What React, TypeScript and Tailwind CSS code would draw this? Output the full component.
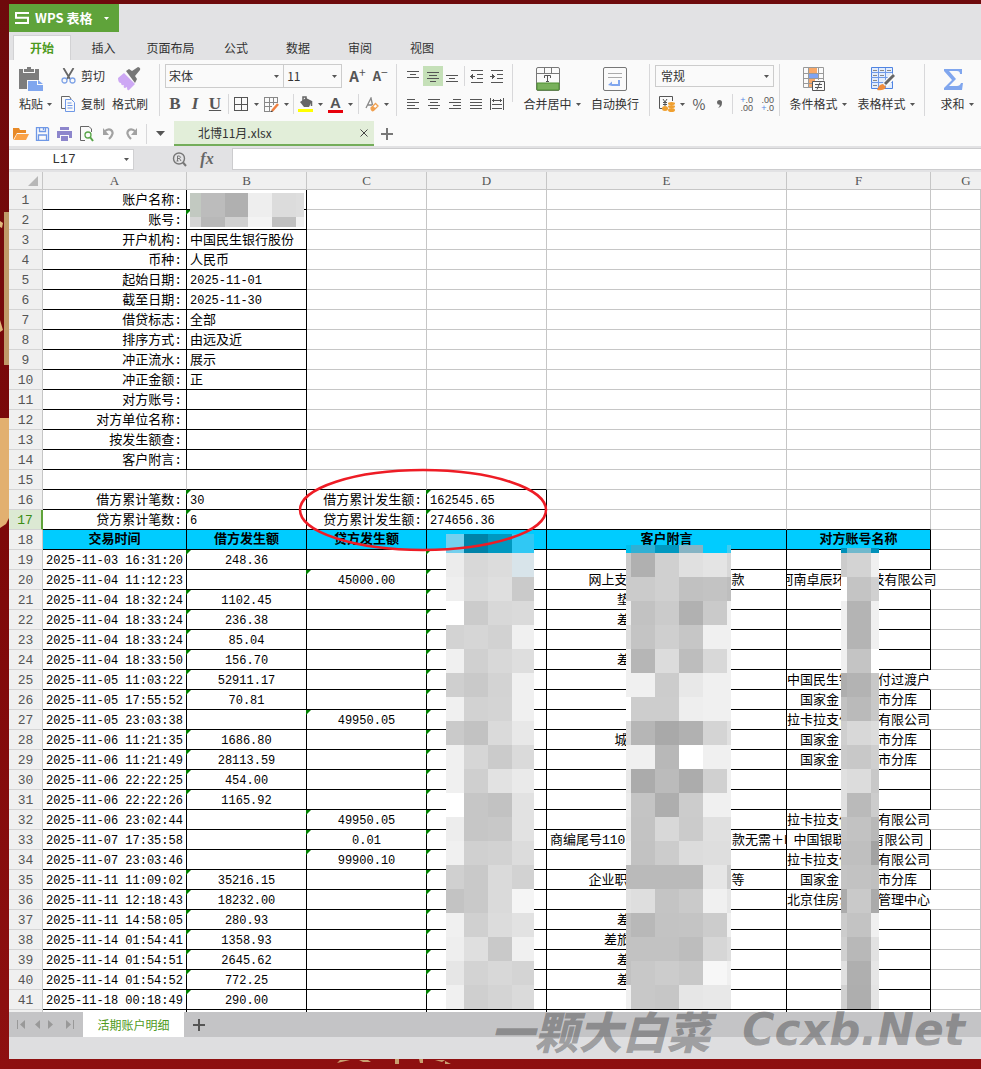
import { ReactNode } from "react";

const gap = (n: number) => "\u3000".repeat(n);

const info = [
  ["账户名称:", ""],
  ["账号:", ""],
  ["开户机构:", "中国民生银行股份有限公司北京分行"],
  ["币种:", "人民币"],
  ["起始日期:", "2025-11-01"],
  ["截至日期:", "2025-11-30"],
  ["借贷标志:", "全部"],
  ["排序方式:", "由远及近"],
  ["冲正流水:", "展示"],
  ["冲正金额:", "正"],
  ["对方账号:", ""],
  ["对方单位名称:", ""],
  ["按发生额查:", ""],
  ["客户附言:", ""],
];

const totals = [
  ["借方累计笔数:", "30", "借方累计发生额:", "162545.65"],
  ["贷方累计笔数:", "6", "贷方累计发生额:", "274656.36"],
];

const lakala = "拉卡拉支付" + gap(2) + "有限公司";
const treasury = "国家金" + gap(3) + "市分库";
const travel = "差" + gap(6) + " ";

// time, debit, credit, remark, counterparty
const records = [
  ["2025-11-03 16:31:20", "248.36", "", "", ""],
  ["2025-11-04 11:12:23", "", "45000.00", "网上支" + gap(8) + "款", "河南卓辰环" + gap(2) + "技有限公司"],
  ["2025-11-04 18:32:24", "1102.45", "", "垫" + gap(6) + " ", ""],
  ["2025-11-04 18:33:24", "236.38", "", travel, ""],
  ["2025-11-04 18:33:24", "85.04", "", "", ""],
  ["2025-11-04 18:33:50", "156.70", "", travel, ""],
  ["2025-11-05 11:03:22", "52911.17", "", "", "中国民生银" + gap(2) + "付过渡户"],
  ["2025-11-05 17:55:52", "70.81", "", "", treasury],
  ["2025-11-05 23:03:38", "", "49950.05", "", lakala],
  ["2025-11-06 11:21:35", "1686.80", "", "城" + gap(7), treasury],
  ["2025-11-06 11:21:49", "28113.59", "", "", treasury],
  ["2025-11-06 22:22:25", "454.00", "", "", ""],
  ["2025-11-06 22:22:26", "1165.92", "", "", ""],
  ["2025-11-06 23:02:44", "", "49950.05", "", lakala],
  ["2025-11-07 17:35:58", "", "0.01", "商编尾号1102" + gap(7) + " 款无需＋h", "中国银联" + gap(2) + "有限公司"],
  ["2025-11-07 23:03:46", "", "99900.10", "", lakala],
  ["2025-11-11 11:09:02", "35216.15", "", "企业职" + gap(8) + "等", treasury],
  ["2025-11-11 12:18:43", "18232.00", "", "", "北京住房公" + gap(2) + "管理中心"],
  ["2025-11-11 14:58:05", "280.93", "", travel, ""],
  ["2025-11-14 01:54:41", "1358.93", "", "差旅" + gap(7) + " ", ""],
  ["2025-11-14 01:54:51", "2645.62", "", travel, ""],
  ["2025-11-14 01:54:52", "772.25", "", travel, ""],
  ["2025-11-18 00:18:49", "290.00", "", "", ""],
];

const steps = (first: number, total: number) => {
  const out = [0];
  for (let v = first; v < total; v += 24) out.push(v);
  return [...out, total];
};

const maskB = ["c2c9c1 bc b0 ee dc de", "d5 b8 d0 f3 c0 f0"];
const maskD = [
  "74d0ee 0082a8 0098c0 30c8f4", "ec d8 dc d8e4ea", "ef da df ca", "ff cb d8 da", "d3 d6 d2 f0",
  "f0 d0 d8 de", "cf c9 d3 f0", "f0 d2 d4 f0", "ca c2 da e8", "f0 d6 cb da", "f0 cf e2 ea",
  "ff c6 c2 e2", "ed c6 c8 e2", "f0 d0 d2 dc", "d0 c9 da d2", "c3 c9 da f5", "f0 d0 dc e2",
  "ee df c9 f0", "e6 d3 d8 d4", "f0 cf d4 da",
];
const maskE = [
  "00c0ec 30b0d4 0098c0 86b4c4 00ccff 40ccf0", "cb b0 d0 e0 e4 d8", "cb cb d0 c1 c3 be",
  "ef c2 cb b1 ca f0", "dc c4 cf c6 f0 f0", "f0 b6 dc bd d8 f0", "f0 f0 cc e8 f0 f0",
  "ff cd cd ee f0 f0", "dc b6 a9 b1 d4 e0", "f0 f0 b8 ff f0 f0", "e8 ab bb ac d0 f0",
  "ec c4 ae cc f0 f0", "ea c3 d8 cb e0 e0", "ee c2 cc dc de de", "ba ba ba ba e6 cc",
  "e2 de c4 ca f0 e6", "c0 b8 c3 c4 cc f0", "c2 c2 c2 bd d6 de", "c2 c8 cc c8 f7 f0", "f0 c8 c6 e6 e8 e8",
];
const maskF = [
  "0090b8 70b8cc 0090b8", "cc d3 f0", "ff c4 d0", "f0 b4 f0", "f0 b4 f0", "f0 c4 ff", "ae b3 c8",
  "c2 ba c8", "cf d8 dc", "cb c8 cf", "e0 dc c8", "e0 ba cc", "c6 c2 b8", "c0 bf a2", "c4 c2 bf",
  "ac c9 aa", "cc c3 f0", "d0 b8 e2", "e0 af e6", "d0 ae e4",
];

const Mosaic = ({ xs, ys, rows, className }: { xs: number[]; ys: number[]; rows: string[]; className: string }) => (
  <svg
    width={xs[xs.length - 1]}
    height={ys[ys.length - 1]}
    shapeRendering="crispEdges"
    aria-hidden="true"
    className={`absolute ${className}`}
  >
    {rows.map((row, r) =>
      row.split(" ").map((c, i) => (
        <rect
          key={`${r}-${i}`}
          x={xs[i]}
          y={ys[r]}
          width={xs[i + 1] - xs[i]}
          height={ys[r + 1] - ys[r]}
          fill={"#" + (c.length === 2 ? c.repeat(3) : c)}
        />
      ))
    )}
  </svg>
);

const Caret = ({ className = "text-[#555]" }: { className?: string }) => (
  <svg width="5" height="3" viewBox="0 0 5 3" className={`shrink-0 ${className}`} aria-hidden="true">
    <path d="M0 0h5L2.5 3z" fill="currentColor" />
  </svg>
);

const Lines = ({ d, label, active }: { d: string; label: string; active?: boolean }) => (
  <button aria-label={label} className={`flex h-5 w-5 items-center justify-center ${active ? "bg-[#c5e0b8]" : ""}`}>
    <svg width="16" height="16" viewBox="0 0 16 16" shapeRendering="crispEdges" stroke="#555" fill="none">
      <path d={d} />
    </svg>
  </button>
);

const Divider = ({ className = "h-[52px]" }: { className?: string }) => (
  <div className={`w-px shrink-0 bg-[#d8d8da] ${className}`} />
);

const BigButton = ({ label, caret, children, className }: { label: string; caret?: boolean; children: ReactNode; className: string }) => (
  <button className={`flex h-[50px] shrink-0 flex-col items-center justify-between whitespace-nowrap ${className}`}>
    <span className={`flex h-[30px] items-center ${caret ? "pr-2" : ""}`}>{children}</span>
    <span className="flex items-center gap-1 leading-5">
      {label}
      {caret && <Caret />}
    </span>
  </button>
);

const TitleBar = () => (
  <header className="bg-[#e2e2e4]">
    <button className="flex h-7 w-[110px] items-center bg-[#5fa33a] pl-[6px] text-[13px] font-bold text-white">
      <svg width="14" height="12" viewBox="0 0 14 12" fill="none" stroke="white" strokeWidth="2">
        <path d="M14 1H1v4.800h12V11H0" />
      </svg>
      <span className="ml-[6px]">WPS 表格</span>
      <Caret className="ml-3 text-white" />
    </button>
    <nav className="flex h-7 items-end pl-1 text-[12px] text-[#333]">
      <a href="#home" className="flex h-[25px] w-[58px] items-center justify-center border-x border-t border-[#d2d2d4] bg-[#fafafa] font-bold text-[#4d9a20]">
        开始
      </a>
      <a href="#insert" className="flex h-6 w-[65px] items-center justify-center">插入</a>
      <a href="#layout" className="flex h-6 w-[69px] items-center justify-center">页面布局</a>
      <a href="#formula" className="flex h-6 w-[62px] items-center justify-center">公式</a>
      <a href="#data" className="flex h-6 w-[62px] items-center justify-center">数据</a>
      <a href="#review" className="flex h-6 w-[62px] items-center justify-center">审阅</a>
      <a href="#view" className="flex h-6 w-[62px] items-center justify-center">视图</a>
    </nav>
  </header>
);

const FontGroup = () => (
  <div className="w-[237px] shrink-0 px-[5px]">
    <div className="flex h-6 items-center">
      <div className="relative flex h-6 w-[123px] items-center border border-[#ccc]">
        <select aria-label="字体" className="h-full w-full appearance-none pl-[3px] outline-none">
          <option>宋体</option>
        </select>
        <Caret className="pointer-events-none absolute right-1 text-[#555]" />
      </div>
      <div className="relative -ml-px flex h-6 w-[61px] items-center border border-[#ccc]">
        <select aria-label="字号" className="h-full w-full appearance-none pl-[3px] outline-none">
          <option>11</option>
        </select>
        <Caret className="pointer-events-none absolute right-1 text-[#555]" />
      </div>
      <button aria-label="增大字号" className="ml-[7px] flex w-5 text-[15px] leading-5 font-bold text-[#555]">
        A<sup className="top-0 text-[12px] leading-3 font-normal">+</sup>
      </button>
      <button aria-label="减小字号" className="ml-1 flex w-5 text-[13px] leading-5 font-bold text-[#555]">
        A<sup className="top-0 text-[12px] leading-3 font-normal">−</sup>
      </button>
    </div>
    <div className="mt-1 flex h-6 items-center font-['Liberation_Serif',serif] text-[17px] font-bold text-[#555]">
      <button className="w-5">B</button>
      <button className="w-5 italic">I</button>
      <button className="w-5 underline">U</button>
      <Divider className="ml-[3px] h-5" />
      <button aria-label="边框" className="ml-[5px] flex items-center gap-[6px]">
        <svg width="14" height="14" viewBox="0 0 14 14" fill="none" stroke="#555" shapeRendering="crispEdges">
          <path d="M.5.5h13v13H.5zM7 0v14M0 7h14" />
        </svg>
        <Caret />
      </button>
      <button aria-label="绘制边框" className="ml-[5px] flex items-center gap-[5px]">
        <svg width="15" height="15" viewBox="0 0 15 15" fill="none" stroke="#888">
          <path d="M.5 14.500V.5h13V5M.5 5h13M.5 9.500H8M5 .5v14M9.500.5v7M.5 14.500H6" shapeRendering="crispEdges" />
          <path d="M8 14l6-7" stroke="#f08040" strokeWidth="2.500" />
          <path d="M6.500 15l2-.8" stroke="#444" strokeWidth="1.500" />
        </svg>
        <Caret />
      </button>
      <Divider className="ml-1 h-5" />
      <button aria-label="填充颜色" className="ml-1 flex items-center gap-[5px]">
        <svg width="15" height="16" viewBox="0 0 15 16">
          <path d="M2 6l6-4 6 3-3 6H6z" fill="#666" />
          <path d="M5 5V1h3v3M13.500 5v5" fill="none" stroke="#666" strokeWidth="1.500" />
          <rect y="13" width="15" height="3" fill="#ff0" />
        </svg>
        <Caret />
      </button>
      <button aria-label="字体颜色" className="ml-[5px] flex items-center gap-[5px]">
        <span className="w-[15px] border-b-[3px] border-red-600 text-center font-['Liberation_Sans',sans-serif] text-[15px] leading-[14px]">A</span>
        <Caret />
      </button>
      <Divider className="ml-[5px] h-5" />
      <button aria-label="清除格式" className="ml-[6px] flex items-center gap-[5px]">
        <svg width="14" height="15" viewBox="0 0 14 15" fill="none">
          <path d="M1 11L6 1l1.500 7M3 8h4" stroke="#888" strokeWidth="1.300" />
          <path d="M6 11l4.500-4.500 2.500 2.500-4.500 4.500q-2 1-2.500-2.500z" fill="#fff" stroke="#f0a050" strokeWidth="1.300" />
          <path d="M6 11l2-2 2.800 2.500-2.300 2q-2 .5-2.500-2.500z" fill="#f0a050" />
        </svg>
        <Caret />
      </button>
    </div>
  </div>
);

const Ribbon = () => (
  <div className="flex h-[61px] items-start overflow-hidden bg-[#fafafa] pt-1 text-[12px] text-[#333]">
    <BigButton label="粘贴" caret className="ml-[9px] w-[35px]">
      <svg width="25" height="24" viewBox="0 0 25 24">
        <path d="M0 2h4v4h12V2h4v11H8v9H0z" fill="#7d7d7d" />
        <path d="M5 2h3V0h4v2h3v3H5z" fill="#7d7d7d" />
        <path d="M9 14h9v4h6v6H9zM19 13l5 4h-5z" fill="#80a6ee" />
      </svg>
    </BigButton>
    <div className="ml-2 flex w-[46px] flex-col gap-[6px]">
      <button className="flex h-6 items-center gap-[5px] whitespace-nowrap">
        <svg width="15" height="16" viewBox="0 0 15 16" fill="none">
          <path d="M2.500 0l6.500 11M12.500 0L6 11" stroke="#666" strokeWidth="1.800" />
          <circle cx="3.500" cy="12.500" r="2.500" stroke="#7fa3e6" strokeWidth="1.300" />
          <circle cx="11.500" cy="12.500" r="2.500" stroke="#7fa3e6" strokeWidth="1.300" />
        </svg>
        剪切
      </button>
      <button className="flex h-5 items-center gap-[5px] whitespace-nowrap">
        <svg width="15" height="16" viewBox="0 0 15 16" fill="none">
          <path d="M5 12.500H.5V.5h8L10 3" stroke="#666" />
          <path d="M4.500 3.500h6l3 3v9h-9zM6.500 7h4M6.500 9.500h5M6.500 12h5" stroke="#6f98e6" />
        </svg>
        复制
      </button>
    </div>
    <BigButton label="格式刷" className="ml-1 w-[38px]">
      <svg width="24" height="24" viewBox="0 0 24 24">
        <path d="M0 11l6-5 11 11-6 6q-2 1-2-3l-2 1q-2 0-1-3-3 1-3-2-3 0-3-5z" fill="#cda8f4" />
        <path d="M8 4l3-2 3 2 6-4q3 1 2 3l-5 6 2 3-2 4z" fill="#777" />
      </svg>
    </BigButton>
    <div className="flex h-[52px] shrink-0">
      <Divider className="ml-[10px] h-[52px]" />
      <FontGroup />
      <Divider className="-ml-px" />
    </div>
    <div className="ml-[6px] w-[104px] shrink-0 pt-[2px]">
      <div className="flex h-5 items-center">
        <Lines label="顶端对齐" d="M2 3.500h12M5 6.500h6M2 9.500h12" />
        <Lines label="垂直居中" active d="M2 4.500h12M4 7.500h8M2 10.500h12M5 13.500h6" />
        <Lines label="底端对齐" d="M2 7.500h12M5 10.500h6M2 13.500h12" />
        <Divider className="mx-[2px] h-5" />
        <Lines label="减少缩进" d="M2 2.500h12M8 6.500h6M8 10.500h6M2 14.500h12M1 8.500h5M3.500 6v5M2.500 7v3" />
        <Lines label="增加缩进" d="M2 2.500h12M8 6.500h6M8 10.500h6M2 14.500h12M1 8.500h5M3.500 6v5M4.500 7v3" />
      </div>
      <div className="mt-2 flex h-5 items-center gap-px">
        <Lines label="左对齐" d="M2 3.500h8M2 6.500h12M2 9.500h8M2 12.500h12" />
        <Lines label="居中" d="M2 3.500h12M4 6.500h8M2 9.500h12M4 12.500h8" />
        <Lines label="右对齐" d="M6 3.500h8M2 6.500h12M6 9.500h8M2 12.500h12" />
        <Lines label="两端对齐" d="M2 3.500h12M2 6.500h12M2 9.500h12M2 12.500h12" />
        <Lines label="分散对齐" d="M1.500 2v12M14.500 2v12M3 4.500h10M4.500 3v3M11.500 3v3M3 8.500h10M3 12.500h10" />
      </div>
    </div>
    <Divider className="ml-[5px] h-[38px]" />
    <BigButton label="合并居中" caret className="ml-[10px] w-[58px]">
      <svg width="24" height="24" viewBox="0 0 24 24" fill="none" stroke="#777">
        <rect x=".5" y=".5" width="23" height="23" rx="1.500" />
        <path d="M1 6.500h22M8.500 1v5M15.500 1v5" />
        <path d="M1 16h22v7H1z" fill="#79b05c" stroke="#4e8f30" />
        <path d="M8.500 11V8.500h6V11M11.500 8.500V14M10 14.500h3" stroke="#555" />
      </svg>
    </BigButton>
    <BigButton label="自动换行" className="ml-[9px] w-[50px]">
      <svg width="24" height="24" viewBox="0 0 24 24" fill="none" stroke="#777">
        <rect x=".5" y=".5" width="23" height="23" rx="1.500" />
        <path d="M5 6.500h14M5 10.500h14" stroke="#aaa" />
        <path d="M5 18l4-3.500V17h6v-4h2v6H9z" fill="#80a6ee" stroke="none" />
      </svg>
    </BigButton>
    <Divider className="ml-[9px] h-[52px]" />
    <div className="ml-[5px] w-[119px] shrink-0 pt-px">
      <div className="relative flex h-[22px] items-center border border-[#ccc]">
        <select aria-label="数字格式" className="h-full w-full appearance-none pl-[5px] outline-none">
          <option>常规</option>
        </select>
        <Caret className="pointer-events-none absolute right-1 text-[#555]" />
      </div>
      <div className="mt-[7px] flex h-5 items-center text-[#555]">
        <button aria-label="货币" className="ml-1 flex items-center gap-1">
          <svg width="17" height="16" viewBox="0 0 17 16" fill="none">
            <path d="M4 12.500H.5V.5h13V5M4 3l2 3 2-3M6 6v4M4 6.500h4M4 8.500h4" stroke="#555" />
            <g fill="#f0a030">
              <ellipse cx="6" cy="12.500" rx="3" ry="2.500" />
              <ellipse cx="12.500" cy="7.500" rx="3.500" ry="1.500" />
              <ellipse cx="12.500" cy="10.500" rx="3.500" ry="1.500" />
              <ellipse cx="12.500" cy="14" rx="3.500" ry="2" />
            </g>
          </svg>
          <Caret />
        </button>
        <button className="ml-1 w-5 text-[14px]">%</button>
        <button aria-label="千位分隔" className="flex w-5 justify-center">
          <svg width="5" height="8" viewBox="0 0 5 8"><path d="M0 2.500A2.300 2.300 0 0 1 5 2.500Q5 7 1 8 2.800 6.500 2.800 4.800 0 5 0 2.500z" fill="#666" /></svg>
        </button>
        <Divider className="ml-[3px] h-5" />
        <button aria-label="增加小数位数" className="w-[20px] text-right font-['Liberation_Sans',sans-serif] text-[9px] leading-2">
          <span className="text-[#5b8ae6]">+</span>.0<br />.00
        </button>
        <button aria-label="减少小数位数" className="w-[21px] text-right font-['Liberation_Sans',sans-serif] text-[9px] leading-2">
          .00<br /><span className="text-[#5b8ae6]">+</span>.0
        </button>
      </div>
    </div>
    <Divider className="ml-[5px] h-[52px]" />
    <BigButton label="条件格式" caret className="ml-[9px] w-[58px]">
      <svg width="23" height="24" viewBox="0 0 23 24" fill="none" stroke="#999">
        <path d="M6 1h8v5H6zM6 12h6v5H6zM6 17h4v4H6z" fill="#f8a868" stroke="none" />
        <path d="M6 6h9v6H6z" fill="#7fa3f2" stroke="none" />
        <path d="M.5.5h20v13M.5.5v20H9M1 6.500h19M1 11.500h19M1 16.500h8M5.500 1v19M15.500 1v12" />
        <path d="M9.500 14.500h12v9h-12zM12 17.500h7M12 20.500h7M17 15.500l-3 7" fill="#fafafa" stroke="#555" />
      </svg>
    </BigButton>
    <BigButton label="表格样式" caret className="ml-[10px] w-[58px]">
      <svg width="25" height="24" viewBox="0 0 25 24" fill="none">
        <path d="M1.500.5h21v21h-21z" fill="#e3edfc" stroke="#4f84e2" />
        <path d="M1 5.500h21M1 10.500h21M1 15.500h21M8.500 1v20M15.500 1v20" stroke="#6f9ae8" />
        <path d="M3 3.500h4M10 3.500h4M17 3.500h4M3 8.500h4M10 8.500h4M3 13.500h4M3 18.500h4" stroke="#888" />
        <path d="M24 8l-9 10" stroke="#fafafa" strokeWidth="6" />
        <path d="M24 8l-9 9" stroke="#666" strokeWidth="3" />
        <path d="M7 23q2-6 6-6l3 3q-2 4-9 3z" fill="#f08c3c" />
      </svg>
    </BigButton>
    <Divider className="ml-[9px] h-[52px]" />
    <BigButton label="求和" caret className="ml-[14px] w-[36px]">
      <svg width="19" height="21" viewBox="0 0 19 21">
        <path d="M0 0h18v5h-2q0-3-3-3H5l7 8-7 7h8q3 0 4-3h2l-1 7H0v-2l8-8-8-9z" fill="#80a6ee" />
      </svg>
    </BigButton>
  </div>
);

const QuickBar = () => (
  <div className="flex h-[25px] items-center bg-[#fafafa] text-[12px] text-[#333]">
    <div className="flex items-center gap-[6px] pl-1">
      <button aria-label="打开">
        <svg width="16" height="14" viewBox="0 0 16 14">
          <path d="M0 13V1h6l1 2h6v3H4z" fill="#e88a28" />
          <path d="M4 7h12l-3 6H1z" fill="#fba348" />
        </svg>
      </button>
      <button aria-label="保存">
        <svg width="16" height="14" viewBox="0 0 16 14" fill="none" stroke="#6f98e6">
          <path d="M1.500.5h11l1 1v12h-12zM4.500.5v4h6v-4M3.500 13V8h8v5M8.500 1v2" strokeWidth="1.300" />
        </svg>
      </button>
      <button aria-label="打印">
        <svg width="16" height="14" viewBox="0 0 16 14">
          <path d="M3 0h9v3H3zM0 4h15v7h-3V8H3v3H0zM4 9h7v5H4z" fill="#8d86cc" />
        </svg>
      </button>
      <button aria-label="打印预览">
        <svg width="16" height="16" viewBox="0 0 16 16" fill="none">
          <path d="M12.500 6V3L10 .5H1.500v14H6" stroke="#666" />
          <circle cx="9" cy="9" r="3" stroke="#58a548" strokeWidth="1.300" />
          <path d="M11 11l3 4" stroke="#58a548" strokeWidth="2" />
        </svg>
      </button>
      <button aria-label="撤销">
        <svg width="16" height="14" viewBox="0 0 16 14" fill="none">
          <path d="M3 5q4-4 7-2 4 3-2 9" stroke="#a2a2a2" strokeWidth="2.200" />
          <path d="M2 1v7h6z" fill="#a2a2a2" />
        </svg>
      </button>
      <button aria-label="恢复">
        <svg width="16" height="14" viewBox="0 0 16 14" fill="none">
          <path d="M13 5Q9 1 6 3q-4 3 2 9" stroke="#a2a2a2" strokeWidth="2.200" />
          <path d="M14 1v7H8z" fill="#a2a2a2" />
        </svg>
      </button>
    </div>
    <Divider className="ml-[7px] h-5" />
    <button aria-label="更多" className="px-[9px]">
      <svg width="9" height="5" viewBox="0 0 9 5"><path d="M0 0h9L4.500 5z" fill="#555" /></svg>
    </button>
    <div className="flex h-full w-[200px] items-center justify-between border-b-2 border-[#74ad5a] bg-[#e2eed9] pr-[6px] pl-6">
      北博11月.xlsx
      <button aria-label="关闭">
        <svg width="8" height="8" viewBox="0 0 8 8" stroke="#444"><path d="M.5.5l7 7M7.500.5l-7 7" /></svg>
      </button>
    </div>
    <button aria-label="新建" className="ml-[7px]">
      <svg width="12" height="12" viewBox="0 0 12 12" stroke="#777" strokeWidth="2"><path d="M6 0v12M0 6h12" /></svg>
    </button>
  </div>
);

const FormulaBar = () => (
  <div className="flex h-[26px] items-center bg-[#e2e2e4]">
    <div className="relative flex h-[21px] w-[125px] items-center border border-l-0 border-[#d0d0d2] bg-white">
      <input
        aria-label="名称框"
        defaultValue="L17"
        className="w-[110px] pt-px text-center font-['Liberation_Mono',monospace] text-[13px] text-[#333] outline-none"
      />
      <Caret className="absolute right-1 text-[#555]" />
    </div>
    <button aria-label="查找" className="ml-[38px]">
      <svg width="15" height="15" viewBox="0 0 15 15" fill="none" stroke="#777">
        <circle cx="7" cy="6.500" r="5.500" strokeWidth="1.400" />
        <path d="M5.500 9V4h2q2 1.200 0 2.500h-2M7.500 6.500L9 9M4.500 9h2" />
        <path d="M11 10.500l3 3.500" strokeWidth="2" />
      </svg>
    </button>
    <button className="ml-3 w-4 font-['Liberation_Serif',serif] text-[16px] leading-5 font-bold text-[#666] italic">fx</button>
    <input aria-label="编辑栏" className="ml-[17px] h-[22px] min-w-0 flex-1 border border-r-0 border-[#ccccce] bg-white px-1 outline-none" />
  </div>
);

type CellProps = {
  children?: ReactNode;
  align?: string;
  flag?: boolean;
  right?: boolean;
  bottom?: boolean;
  open?: boolean;
};

const isNumeric = (v: ReactNode) => typeof v === "string" && /^[\d.:\- ]+$/.test(v);

const Cell = ({ children, align = "justify-center", flag, right, bottom, open }: CellProps) => (
  <td
    className={`relative h-5 border-r border-b p-0 ${right ? "border-r-black" : open ? "border-r-white" : "border-r-[#c6c6c6]"} ${bottom ? "border-b-black" : "border-b-[#c6c6c6]"}`}
  >
    {flag && (
      <svg width="5" height="5" className="absolute top-0 -left-px" aria-hidden="true">
        <path d="M0 0h5L0 5z" fill="#008000" />
      </svg>
    )}
    {children && (
      <div
        className={`flex h-[19px] items-center pt-[2px] whitespace-pre ${align} ${isNumeric(children) ? "text-[12px]" : "text-[13px]"} ${open ? "[clip-path:inset(0_-20px_0_0)]" : "overflow-hidden"}`}
      >
        {children}
      </div>
    )}
  </td>
);

const RowHead = ({ n }: { n: number }) => (
  <th
    scope="row"
    className={`h-5 border-b border-b-[#d4d4d4] p-0 pt-[2px] text-center text-[13px] leading-[17px] font-normal ${
      n === 17 ? "border-r-2 border-r-[#5fa33a] bg-[#dce9d3] text-[#3c8c14]" : "border-r border-r-[#c6c6c6] bg-[#f0f0f0] text-[#555]"
    }`}
  >
    {n}
  </th>
);

const Head = ({ children }: { children: ReactNode }) => (
  <td className="h-5 border-r border-b border-black bg-[#00ccff] p-0 pt-px text-center text-[13px] leading-[18px] font-bold">
    {children}
  </td>
);

const Sheet = () => (
  <main className="relative overflow-hidden bg-white">
    <table className="w-full table-fixed border-separate border-spacing-0 font-['Liberation_Mono','Noto_Sans_CJK_SC',monospace] leading-[18px] text-black">
      <colgroup>
        <col className="w-[34px]" />
        <col className="w-36" />
        <col className="w-[120px]" />
        <col className="w-[120px]" />
        <col className="w-[120px]" />
        <col className="w-60" />
        <col className="w-36" />
        <col />
      </colgroup>
      <thead>
        <tr className="h-[18px] bg-[#f0f0f0] text-[13px] leading-4 text-[#555]">
          <td className="border-r border-b border-[#c6c6c6] p-0">
            <svg width="10" height="10" className="mr-1 ml-auto" aria-hidden="true">
              <path d="M10 0v10H0z" fill="#b8b8b8" />
            </svg>
          </td>
          {["A", "B", "C", "D", "E", "F"].map((c) => (
            <th key={c} scope="col" className="border-r border-b border-[#c6c6c6] p-0 pt-px font-['Liberation_Serif',serif] font-normal">
              {c}
            </th>
          ))}
          <th scope="col" className="border-b border-[#c6c6c6] p-0 pt-px pl-5 font-['Liberation_Serif',serif] font-normal">G</th>
        </tr>
      </thead>
      <tbody>
        {info.map(([label, value], i) => (
          <tr key={label}>
            <RowHead n={i + 1} />
            <Cell right bottom align="justify-end pr-1">{label}</Cell>
            <Cell right bottom flag={i === 1} align="justify-start pl-[3px]">
              {i === 2 ? <span className="h-full leading-[17px] whitespace-normal">{value}</span> : value}
            </Cell>
            <Cell />
            <Cell />
            <Cell />
            <Cell />
            <Cell />
          </tr>
        ))}
        <tr>
          <RowHead n={15} />
          <Cell bottom />
          <Cell bottom />
          <Cell bottom />
          <Cell bottom />
          <Cell />
          <Cell />
          <Cell />
        </tr>
        {totals.map(([a, b, c, d], i) => (
          <tr key={a}>
            <RowHead n={i + 16} />
            <Cell right bottom align="justify-end pr-1">{a}</Cell>
            <Cell right bottom flag align="justify-start pl-[3px]">{b}</Cell>
            <Cell right bottom align="justify-end pr-1">{c}</Cell>
            <Cell right bottom flag align="justify-start pl-[3px]">{d}</Cell>
            <Cell bottom={i === 1} />
            <Cell bottom={i === 1} />
            <Cell />
          </tr>
        ))}
        <tr>
          <RowHead n={18} />
          <Head>交易时间</Head>
          <Head>借方发生额</Head>
          <Head>贷方发生额</Head>
          <Head>{""}</Head>
          <Head>客户附言</Head>
          <Head>对方账号名称</Head>
          <Cell />
        </tr>
        {records.map(([time, debit, credit, remark, party], i) => (
          <tr key={i}>
            <RowHead n={i + 19} />
            <Cell right bottom>{time}</Cell>
            <Cell right bottom flag={!!debit}>{debit}</Cell>
            <Cell right bottom flag={!!credit}>{credit}</Cell>
            <Cell right bottom flag />
            <Cell right bottom align={remark.startsWith("商编") ? "justify-start pl-[3px]" : "justify-center"}>{remark}</Cell>
            <Cell right={party.length < 11} bottom open={party.length >= 11}>{party}</Cell>
            <Cell />
          </tr>
        ))}
        {/* sliver of the next row above the sheet tabs */}
        <tr className="h-[2px]">
          <td className="border-r border-[#c6c6c6] bg-[#f0f0f0] p-0" />
          {[1, 2, 3, 4, 5, 6].map((c) => (
            <td key={c} className="border-r border-black p-0" />
          ))}
          <td className="p-0" />
        </tr>
      </tbody>
    </table>
    <Mosaic xs={[0, 11, 35, 58, 82, 106, 114]} ys={[0, 24, 34]} rows={maskB} className="top-[21px] left-[181px]" />
    <Mosaic xs={[0, 18, 42, 66, 88]} ys={steps(19, 476)} rows={maskD} className="top-[362px] left-[437px]" />
    <Mosaic xs={[0, 5, 29, 53, 77, 101, 105]} ys={steps(8, 465)} rows={maskE} className="top-[373px] left-[617px]" />
    <Mosaic xs={[0, 6, 30, 38]} ys={steps(5, 462)} rows={maskF} className="top-[376px] left-[832px]" />
    <svg width="250" height="84" viewBox="0 0 250 84" className="absolute top-[296px] left-[289px]" aria-hidden="true">
      <ellipse cx="125" cy="42" rx="123" ry="40" fill="none" stroke="#ee1c25" strokeWidth="2.500" />
    </svg>
  </main>
);

const Footer = () => (
  <footer className="relative text-[12px]">
    <div className="flex h-[25px] items-center bg-[#c4c4c6]">
      <div className="flex w-[74px] items-center pl-2 text-[#999]">
        <button aria-label="第一张">
          <svg width="8" height="9" viewBox="0 0 8 9" fill="currentColor"><path d="M0 0h1v9H0zM8 0v9L3 4.500z" /></svg>
        </button>
        <button aria-label="上一张" className="ml-[10px]">
          <svg width="5" height="9" viewBox="0 0 5 9" fill="currentColor"><path d="M5 0v9L0 4.500z" /></svg>
        </button>
        <button aria-label="下一张" className="ml-2">
          <svg width="5" height="9" viewBox="0 0 5 9" fill="currentColor"><path d="M0 0v9l5-4.500z" /></svg>
        </button>
        <button aria-label="最后一张" className="ml-[13px]">
          <svg width="8" height="9" viewBox="0 0 8 9" fill="currentColor"><path d="M7 0h1v9H7zM0 0v9l5-4.500z" /></svg>
        </button>
      </div>
      <button className="h-full w-[101px] bg-white text-[#4f9a22]">活期账户明细</button>
      <button aria-label="新建工作表" className="ml-[9px]">
        <svg width="12" height="12" viewBox="0 0 12 12" stroke="#555" strokeWidth="2"><path d="M6 0v12M0 6h12" /></svg>
      </button>
    </div>
    <div className="h-[22px] bg-[#dedee0]" />
    <div className="pointer-events-none absolute top-0 right-4 flex h-9 items-center gap-8 leading-9 font-black whitespace-nowrap text-black/30 italic">
      <span className="text-[44px]">一颗大白菜</span>
      <span className="font-['DejaVu_Sans',sans-serif] text-[44px]">Ccxb.Net</span>
    </div>
  </footer>
);

const Backdrop = () => (
  <>
    <svg width="9" height="330" viewBox="0 0 9 330" className="absolute top-[210px] left-0" aria-hidden="true">
      <path d="M4 2h5v153H4z" fill="#c09a68" />
      <path d="M0 11l3 2-1 5-2-1zM0 110l3 10-3 2z" fill="#e0b87c" />
      <path d="M0 208h9v100l-3 6-6 4z" fill="#e2b070" />
    </svg>
    <svg width="120" height="6" viewBox="0 0 120 6" className="absolute bottom-1 left-[335px]" aria-hidden="true">
      <path d="M5 1h10L2 4zM24 1h9l3 2h-8zM60 0h4v5h-4zM84 0h4v4h-3zM100 1h10l-3 2zM110 2l6 3h-6z" fill="#c9a070" />
    </svg>
  </>
);

const App = () => {
  return (
    <div className="relative min-h-screen bg-gradient-to-b from-[#6e0a0c] via-[#7d0809] to-[#8e1010] pt-1 pb-[10px] pl-[9px] font-['Noto_Sans_CJK_SC',sans-serif]">
      <Backdrop />
      <div>
        <TitleBar />
        <Ribbon />
        <QuickBar />
        <FormulaBar />
        <Sheet />
        <Footer />
      </div>
    </div>
  );
};

export default App;
